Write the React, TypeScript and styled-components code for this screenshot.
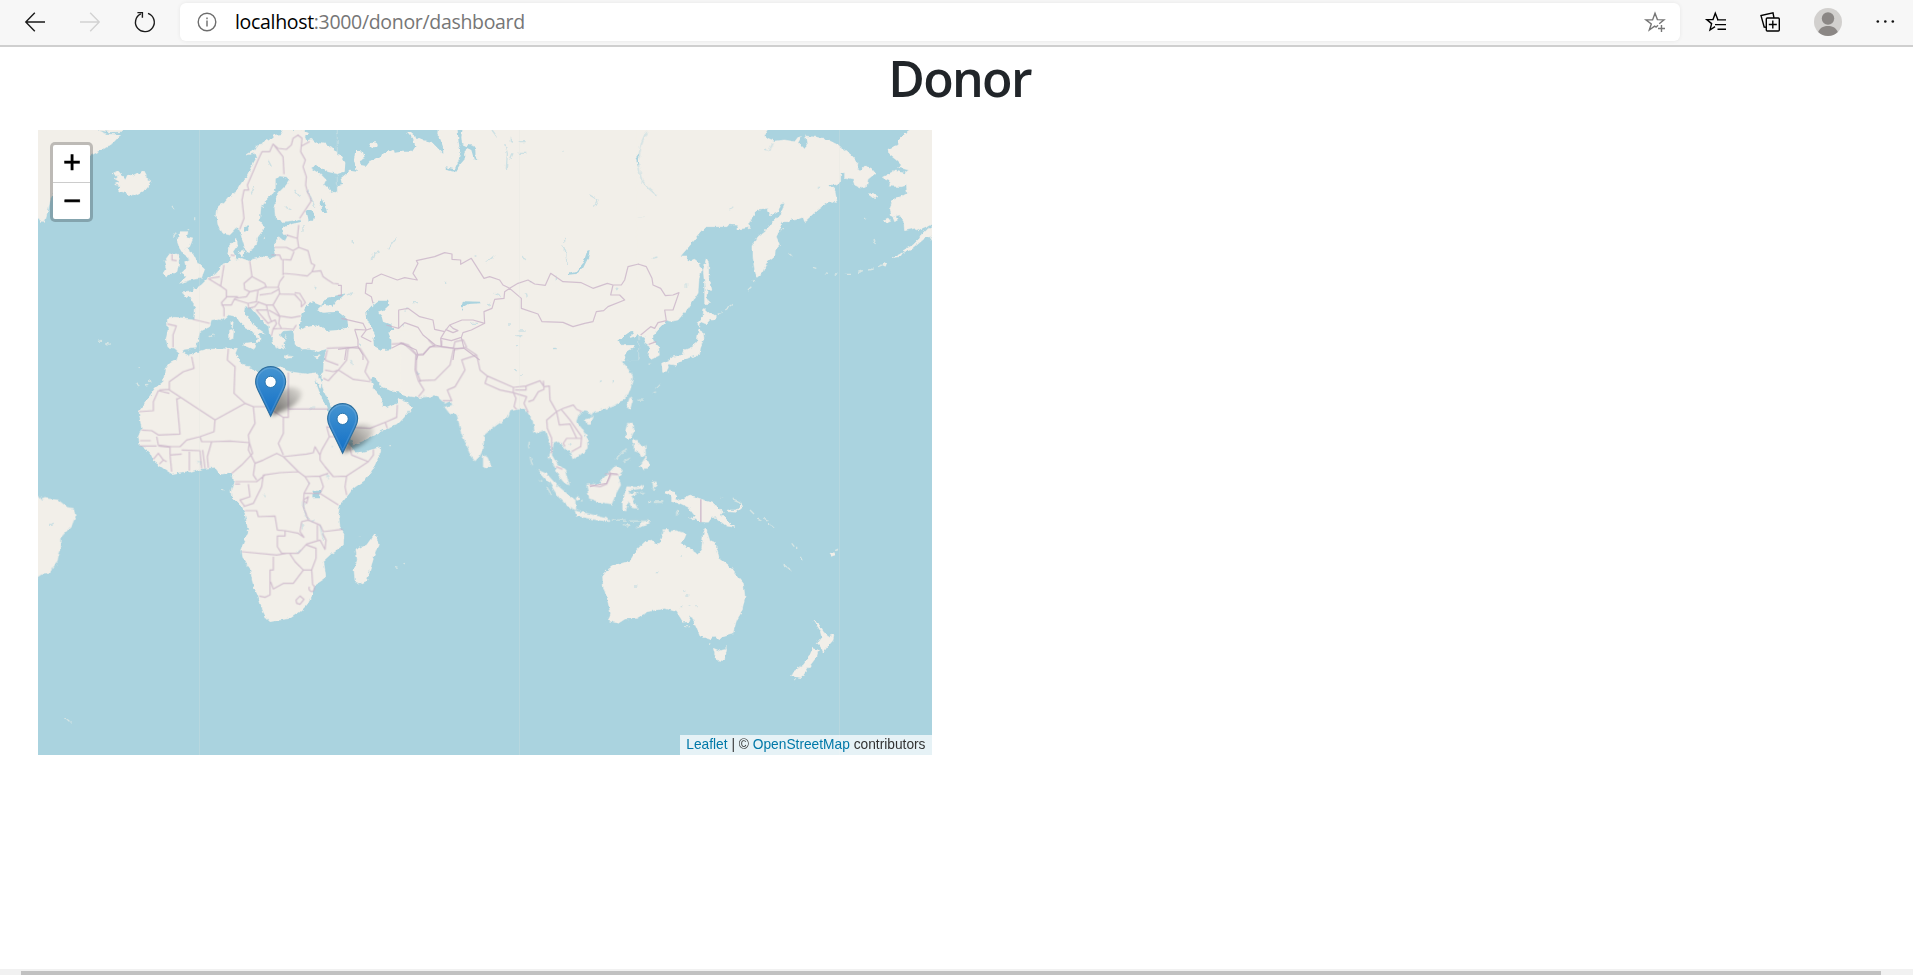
import React from "react";
import styled, { createGlobalStyle } from "styled-components";

const GlobalStyle = createGlobalStyle`
  * { box-sizing: border-box; }
  body { margin: 0; background: #fff; overflow: hidden; }
`;

const Page = styled.div`
  display: flex;
  flex-direction: column;
  width: 1913px;
  height: 975px;
  background: #fff;
`;

const Toolbar = styled.header`
  display: flex;
  align-items: center;
  flex: none;
  height: 47px;
  background: #f7f7f7;
  border-bottom: 2px solid #cfcfcf;
`;

const NavButtons = styled.nav`
  display: flex;
  align-items: center;
  gap: 35px;
  width: 180px;
  padding: 0 0 2px 25px;
`;

const AddressBar = styled.div`
  display: flex;
  align-items: center;
  width: 1500px;
  height: 38px;
  margin-bottom: 1px;
  padding: 0 15px 1px 17px;
  border-radius: 6px;
  background: #fff;
  box-shadow: 0 0 4px rgba(0, 0, 0, 0.07);
`;

const Url = styled.span`
  flex: 1;
  margin-left: 18px;
  color: #767676;
  font-family: "Open Sans", "Noto Sans", sans-serif;
  font-size: 19.5px;
  letter-spacing: -0.32px;
  line-height: 26px;
  white-space: nowrap;
`;

const Host = styled.span`
  color: #000;
`;

const ToolButtons = styled.div`
  display: flex;
  align-items: center;
  gap: 34px;
  padding: 0 0 1px 26px;
`;

const Icon = styled.svg<{ $tone?: string }>`
  display: block;
  flex: none;
  fill: none;
  stroke: ${(p) => p.$tone ?? "#1a1a1a"};
  stroke-width: 1.4;
  overflow: visible;
`;

const Content = styled.main`
  flex: 1;
  display: flex;
  flex-direction: column;
  padding: 0 0 0 38px;
`;

const Title = styled.h1`
  width: 1843px;
  height: 60px;
  margin: 1px 0 22px;
  color: #212529;
  font-family: "Open Sans", "Noto Sans", sans-serif;
  font-size: 50px;
  font-weight: 600;
  letter-spacing: -1.7px;
  line-height: 60px;
  text-align: center;
`;

const MapPane = styled.section`
  position: relative;
  width: 894px;
  height: 625px;
  overflow: hidden;
  background: #aad3df;
`;

const MapDrawing = styled.svg`
  display: block;
`;

const ZoomControl = styled.div`
  position: absolute;
  top: 12px;
  left: 12px;
  display: flex;
  flex-direction: column;
  width: 43px;
  height: 80px;
  border: 3px solid rgba(0, 0, 0, 0.22);
  border-radius: 5px;
  background: #fff;
  background-clip: padding-box;
`;

const ZoomButton = styled.button`
  flex: 1;
  display: flex;
  align-items: center;
  justify-content: center;
  padding: 0 0 0 1px;
  border: 0;
  background: none;
  color: #000;
  font: 400 31px/36px "Liberation Sans", Arial, sans-serif;
  -webkit-text-stroke: 0.5px #000;

  & + & {
    border-top: 1px solid #ccc;
  }
`;

const Attribution = styled.div`
  position: absolute;
  right: 0;
  bottom: 0;
  height: 20px;
  padding: 0 6.5px;
  background: rgba(255, 255, 255, 0.7);
  color: #333;
  font: 13.75px/19px "Liberation Sans", Arial, sans-serif;
  white-space: nowrap;
`;

const MapLink = styled.a`
  color: #0078a8;
  text-decoration: none;
`;

const Pin = styled.svg<{ $x: number; $y: number }>`
  position: absolute;
  left: ${(p) => p.$x}px;
  top: ${(p) => p.$y}px;
  overflow: visible;
`;

const ScrollTrack = styled.div`
  flex: none;
  height: 6px;
  padding: 2px 32px 0 21px;
  background: #f1f1f1;
`;

const ScrollThumb = styled.div`
  height: 4px;
  background: #c1c1c1;
`;

/* Geometry is kept per region, in thirds of a pixel from the region's origin. */
interface Region {
  x: number;
  y: number;
  land: string;
  islets?: string;
  sea?: string;
  haze?: string;
  borders?: string;
}

const regions: Region[] = [
  {
    // Greenland, Europe
    x: 38,
    y: 130,
    land:
      "M-12 -12H180V0L205 12 248 14 225 38 200 55 165 73 100 100 60 160 38 205 28 250 20 277 6 277 0 265 -12 265Z M178 0H255L250 5 215 6Z " +
      "M225 130L240 122 255 140 262 150 270 132 282 138 300 128 306 132 318 122 325 135 323 142 338 152 330 172 310 185 285 198 262 188 242 182 248 168 230 163 246 156 228 145 240 140Z " +
      "M902 72L880 50 860 42 835 38 820 28 805 32 800 20 812 10 790 0H730L735 12 712 15 700 26 680 32 672 45 655 48 650 60 625 75 650 70 655 85 640 110 628 135 610 160 595 185 570 202 560 215 540 230 536 260 540 285 555 310 575 315 595 295 605 300 612 325 618 345 625 367 640 360 655 345 660 320 680 293 665 272 668 240 680 215 700 195 712 175 712 150 725 138 745 140 755 150 745 165 725 185 712 205 714 225 710 235 712 260 730 275 760 272 785 266 792 276 782 278 745 288 735 295 738 308 748 320 740 335 722 320 712 335 710 360 715 378 700 385 680 380 645 388 635 394 610 385 595 390 590 375 585 365 598 345 597 325 575 345 572 375 580 395 555 402 545 420 530 435 510 445 490 465 470 478 465 472 463 485 435 488 440 497 460 505 472 535 470 567 410 562 388 568 390 600 384 630 390 652 410 655 425 668 440 658 470 655 480 632 485 605 515 590 520 570 545 565 560 568 575 555 595 560 605 575 620 590 640 600 660 625 655 640 667 630 662 610 682 612 660 595 640 578 618 545 620 532 640 532 655 550 680 580 692 590 695 615 705 625 705 635 715 655 722 640 742 655 735 640 743 632 725 615 735 603 765 600 768 612 768 640 790 658 815 655 840 665 870 655 902 652V190L880 180 858 165 865 150 845 130 820 115 830 102 870 125 902 132Z " +
      "M425 305L450 305 446 320 465 325 455 350 442 355 465 370 480 400 500 418 490 445 455 450 425 460 445 440 430 430 445 415 440 395 455 388 438 375 425 355 418 335Z " +
      "M395 372L418 372 424 388 417 425 385 437 375 430 385 415 378 395Z M575 600L587 598 585 625 575 630Z M578 578L586 574 583 595Z M617 643L655 640 648 658Z M603 368L618 362 612 378Z M735 678L765 682 745 686Z M830 683L848 677 838 687Z",
    islets: "M405 228l6 8M470 262v12M406 320l8 -12M448 295l5 5M678 328l5 -8M512 620l8 -2M525 612l5 3M180 634l12 -3M205 640l10 3M740 615l8 12M590 385l12 5",
    sea:
      "M783 600L790 560 805 525 825 517 850 527 836 540 855 548 900 545 928 568 930 592 900 600 870 602 840 585 810 590Z M848 527L868 503 898 496 925 490 895 515 885 530 862 524Z M805 240L820 240 832 255 828 272 812 272Z M850 205L862 230 868 250 855 245 848 225Z M618 292L632 288 630 302 618 305Z M862 165L890 182 880 185Z",
    haze: "M795 285V305M830 470L838 478M640 190L650 170M690 90L700 110M740 230L760 240M770 180L785 200M810 180L830 230",
    borders:
      "M605 298L618 265 612 210 618 180 632 180 628 165 660 90 672 65 695 65 705 42 735 80 738 132M705 42L720 55 745 58 760 45 765 25 780 15 792 25 788 65 802 90 795 110 805 140 803 165 808 185 820 212 785 265M815 35L790 48M782 285L778 325 745 315M778 325L782 352 765 362 745 352 710 352M700 375L725 375 730 388 758 390 768 365M735 388V435M782 352L810 362 820 400 830 405 822 425 808 438 770 433 735 430M822 425L848 422 855 440 870 450 885 460 902 462M635 392L642 440 680 460 685 472 720 472 725 455 738 438M642 440L618 460 620 478 635 485 625 500 590 505M635 485L660 480 685 470M660 482L655 515 630 520 590 508M665 495L700 490 722 478M725 490L705 525 685 525 658 515M722 472L725 492 770 493 790 515 790 532M770 488L785 490 802 518 790 530M705 525L725 558 760 563 788 558M685 525L692 555 700 575 690 580 655 540 688 540M630 520L632 535 650 530 660 518M692 540L710 550 725 560 722 580 730 595 768 598M698 575L712 570 715 582 705 597 730 595M705 597L700 618M510 445L548 468 565 480 565 502 550 518 558 535 558 560M558 405L548 468M515 445L545 440M565 500L600 500M550 525L580 525 590 505M465 568L515 580M388 582L415 588 405 615 405 652M402 372V390L416 392M578 375L590 377M765 600L775 585",
  },
  {
    // Western Siberia, Central Asia
    x: 338,
    y: 130,
    land: "M-2 -12H902V690H-2Z",
    sea:
      "M-2 -12H300L298 15 305 22 315 50 316 72 295 50 280 35 255 30 235 22 215 5 208 10 225 28 232 50 222 65 190 65 170 68 168 60 155 66 152 60 130 75 95 95 85 108 68 105 65 90 80 85 75 65 52 62 48 90 57 125 35 122 8 145 12 165 -2 168V132L20 125 22 98 10 78 -2 75Z " +
      "M358 -12H375L370 22 372 42 385 48 400 42 412 60 413 85 425 92 408 88 400 60 385 53 378 70 380 88 365 105 352 125 325 120 322 112 350 118 362 90 368 65 362 40Z " +
      "M85 545L100 528 120 512 150 512 154 525 140 538 120 545 130 555 135 575 160 585 167 600 150 605 160 630 160 658 130 660 108 648 106 630 110 610 98 590 88 570Z " +
      "M755 360L750 385 735 415 712 435 692 437 692 431 715 425 735 400 748 362Z M370 540L367 525 382 514 428 515 428 520 390 522 376 530Z " +
      "M838 632L862 615 880 602 888 610 870 625 902 615V692H862L858 680 866 666 885 655 890 645 855 646Z M892 80l8 -10v40z",
    haze:
      "M462 0L478 22M500 40L508 70 505 118M515 92L525 70M540 35H560M540 70H565M520 20v15M675 62v6M755 195L780 210 770 228M670 350L682 360 688 405M680 320v15M100 390L108 370 125 366M150 357L175 325M445 398L468 378M555 378l8 12M320 455v4M30 495L45 488M222 518H240M200 545l8 -10M470 490L488 497M450 520l8 8M545 603H560M535 617H553M645 656H660M575 455H580M565 490l3 10M655 440v12M400 580H420M195 582v8M65 640l5 8M835 480l5 -6M510 585h6M410 378h5M43 330v8",
    borders:
      "M105 520L100 500 82 490 85 460 102 460 105 445 130 432 178 450 200 443 238 450 225 430 240 400 235 392 290 380 320 368 342 372 342 388 368 390 368 403 400 385 438 445 455 440 485 450 495 465 515 475 500 485 498 505 470 508 462 535 438 545 440 580 405 570 372 570 335 585 320 605 290 598 285 570 245 560 210 535 182 540V595L200 578 240 592 255 615 292 645 275 652 255 675 240 675 235 660 190 640 160 655M515 475L540 460 570 450 590 462 622 466 638 430 675 455 730 458 765 475 808 460 825 465 818 495 845 495 860 510 810 530 797 542 775 545 765 575 740 580 705 590 675 577 612 575 600 552 550 535 550 505 515 475M825 465L850 465 860 450 870 410 902 402M292 645L310 650 308 625 320 605M310 625L340 632 370 622 378 655 350 655 310 650M440 580L400 600 375 608 370 622M322 598L345 608 360 602 345 595 335 585M145 585L182 595M350 655L345 690M378 655L425 690M240 675L235 690M10 565L75 580 85 600 100 595M50 598L60 630 60 650 0 658M50 598L85 600 70 620 100 635M60 650L75 675 75 690M25 655L20 690M0 466H10V496H0",
  },
  {
    // Eastern Siberia, Alaska
    x: 638,
    y: 130,
    land:
      "M-2 -12H388V0L378 15 390 25 410 33 440 30 470 35 480 22 490 20 480 38 498 55 507 45 503 18 560 25 600 45 640 75 660 98 658 115 670 120 680 108 700 115 712 130 690 148 685 172 670 175 650 165 645 150 620 145 620 128 608 130 608 155 590 165 570 163 590 180 598 218 575 213 540 238 500 275 495 262 470 270 460 265 450 275 430 275 425 300 415 320 425 345 412 360 410 380 385 400 372 430 357 442 350 420 345 380 345 345 360 320 385 300 410 270 430 250 440 220 428 222 420 245 398 258 390 235 360 238 340 265 330 285 338 292 300 298 300 286 275 284 270 290 205 290 190 305 165 335 128 378 145 378 150 392 170 388 185 400 190 420 183 450 180 490 150 535 120 570 100 574 85 570 75 582 55 602 45 615 45 630 62 650 64 676 40 688 32 680 35 650 20 640 22 618 -2 618Z " +
      "M205 388L212 400 212 440 222 478 208 478 205 500 215 520 200 522 200 470 196 420Z M197 535L215 550 235 562 230 570 215 570 205 582 188 575 185 592 178 580 195 560Z " +
      "M182 598L195 605 198 625 188 650 184 675 156 682 136 690 121 697 116 706 94 702 86 727 74 727 71 700 91 690 106 680 135 675 140 660 165 650 178 630Z " +
      "M815 -12L815 0 800 10 780 30 778 45 750 58 752 72 775 90 790 105 780 112 812 120 800 130 770 122 733 142 755 150 752 168 790 170 805 166 808 190 790 200 765 210 755 235 762 260 785 255 797 275 800 302 830 295 842 302 870 290 896 275V-12Z " +
      "M896 282L882 290 855 305 845 325 825 345 795 362 798 370 825 355 860 325 896 312Z M690 192l15 -2 15 10 -12 6z M738 270l12 -6 8 10 -12 5z M765 262l10 -5 5 12 -10 6z M735 405l12 -8 -5 12z M876 322l8 12v-15z M765 383l20 -10 10 -6 -8 12z",
    islets: "M720 410l25 -10M660 427l15 -5M620 433h22M590 432h8M525 412l10 3M452 370l10 8M430 300l8 -6M345 455l8 -8M235 555l20 -10M262 540l25 -18M330 480l10 -10M560 428l10 2M690 420l14 -3M680 264l5 4M708 330l5 12",
    haze: "M25 5L12 35 0 90M0 100L10 150 35 178 55 195M275 238l10 -8M395 60L405 40M44 385l14 -4M145 460v14M540 172h8M0 260h15M380 60l10 3",
    borders: "M0 402L25 410 42 445 45 465 68 475 82 497 105 495 123 488 105 540 80 540 85 572 60 578 50 595 38 590 8 615M32 643L55 635",
  },
  {
    // Africa, Arabia
    x: 120,
    y: 340,
    land:
      "M180 35L205 46 220 40 260 28 325 26 352 25 346 40 357 60 365 75 385 80 410 95 440 108 455 85 485 80 500 92 520 97 560 102 590 98 603 130 602 145 585 115 588 130 605 175 620 200 630 230 640 260 680 300 692 320 708 338 730 336 782 322 782 335 760 385 735 420 700 445 680 470 660 495 655 520 660 560 672 580 670 615 635 640 608 665 612 690 615 715 585 735 575 765 560 795 540 815 510 835 450 845 440 835 430 815 415 770 400 735 390 685 365 650 362 630 385 575 375 520 365 500 335 470 333 455 342 425 340 405 328 398 300 403 285 382 245 386 215 397 205 393 155 401 130 385 100 362 90 340 60 315 55 290 65 265 57 215 85 175 105 145 130 125 135 90 150 70 170 60 178 40Z " +
      "M525 0L530 20 575 30 590 28 620 25 612 60 610 95 605 105 607 140 630 190 645 215 670 250 690 290 700 315 730 302 790 270 830 255 850 235 875 205 860 185 835 175 832 190 800 205 788 195 785 175 762 145 750 115 765 112 785 140 820 155 838 152 850 165 902 172V-30H525Z " +
      "M765 580L775 610 762 650 740 722 720 732 705 722 702 690 712 660 708 630 740 615Z M370 15L402 10 396 26Z M458 0h30l-8 10 10 18 -15 -8 -10 -5z",
    islets: "M490 48L520 50M582 52L600 48M808 317h8M825 680l8 2M850 672l5 -2M48 130l10 8M75 135l10 -2M85 122l8 4M718 590v3M308 447v4M330 408l4 4M55 80l4 3",
    sea: "M578 452L605 452 598 475 577 475Z",
    haze: "M550 485L552 510 565 538M600 555L605 580 612 600M232 365h10v12M620 405l6 15M575 545l8 -5M565 430h4M635 320h4M570 208l15 -8M692 60l5 15M530 640l12 -10M432 465l5 6M550 565l-5 -15",
    borders:
      "M215 50L222 85 190 95 148 125 148 150 285 240 375 190 400 200M148 160L115 152 100 185 100 212 57 215M148 148L118 150M170 175L180 282 115 285 95 272 65 270M170 178L182 172M325 26L322 60 345 80 342 160 375 190M400 200L440 200 490 232 505 232V97M505 207H625M490 232V280L475 310 490 345M400 200L405 250 385 285 388 308M285 240L282 275 240 290 245 305 275 305 330 303 388 308 398 340 365 375 335 400M110 290L115 315 155 320 180 320 200 300 240 290M185 330L240 332 245 385M208 335V392M248 330L255 385M275 305L262 350 265 384M388 308L385 330 405 370 400 405 410 420M405 370L430 360 470 340 490 350 560 342 580 338 585 320 600 345 600 360 615 380 640 410 680 408 745 365 695 345 690 325M745 365L760 345V328M490 350L535 395 480 398 430 405 425 440 400 490 370 500M535 395L555 410 600 408 625 400M680 408L675 440 680 465M555 410L568 430 552 460 600 460 655 495M600 410L610 440 600 460M552 460L550 500 565 540 600 555 610 575 668 568M375 512L410 512 415 530 465 528 472 570 495 572 535 580 552 592 540 575 545 545 565 540M495 572V588H472V620L485 640 535 640 560 612 600 600M365 635L470 645 500 640M460 650V690H450V765L435 772 418 768M452 725L460 747 490 730 520 730 550 690 575 690 588 655 588 625 560 615M510 642L525 665 550 690M575 690L578 735M600 600L615 628 618 600 608 580M592 555L592 600M150 345L185 342M150 345L155 395M60 318L110 318M115 318L150 322 150 345M100 358L115 340 130 360 118 372M130 360L140 365M60 302L92 302M345 425H410L435 405M345 432H360M385 432L390 470 360 480 375 500M620 25L685 22 720 25 745 65 735 95 752 122M685 22L680 60 655 90 700 118 752 125M655 75L615 60M655 90L640 95 615 90M655 90L640 105 625 122 610 115M695 262L750 265 800 245 830 232 832 195M795 245L802 265M815 12L850 10 890 45 888 90 902 125M640 265L620 260 628 290 605 330 600 345M690 315L665 290 628 290M615 60L622 30M568 740a8 10 0 1 0 10 -5M528 780l12 -12 12 10 -12 15 -10 -3zM550 480l15 -10 -5 20z",
  },
  {
    // South and Southeast Asia
    x: 400,
    y: 340,
    land:
      "M0 148L10 165 55 172 110 168 135 190 150 182 158 195 135 202 150 222 170 220 175 240 185 280 200 315 215 350 225 363 238 350 250 325 252 285 280 262 325 230 330 213 350 208 375 206 385 220 400 245 405 280 435 270 445 300 455 330 447 350 460 370 475 405 490 425 508 435 500 410 495 390 470 370 455 345 460 310 475 305 485 312 495 325 515 340 518 357 540 345 562 325 562 295 545 265 528 245 535 225 550 213 570 218 574 228 582 215 610 208 640 198 670 180 690 150 698 110 685 85 665 65 676 40 705 20 690 12 670 20 655 0H0Z " +
      "M250 345L262 352 272 375 260 387 250 380Z M556 240L580 231 572 250 560 250Z M690 172L698 178 690 208 680 200Z M682 250L700 250 702 272 692 295 680 290 678 270Z M720 378L738 350 748 375 735 390Z " +
      "M413 390L440 402 470 435 500 460 525 480 528 510 505 500 475 470 450 430Z M525 513L560 520 620 535 628 545 580 538 530 527Z M712 564L730 546 752 543 735 556Z " +
      "M560 435L595 432 620 405 648 375 668 392 655 408 662 435 648 460 635 492 595 485 568 475Z M680 440L715 442 732 432 725 445 690 450 685 462 715 458 695 470 712 505 695 502 685 482 678 510 668 508 668 485Z " +
      "M528 470l8 0 0 12 -6 2z M700 300l12 2 8 12 15 5 2 25 -12 8 -8 -15 -15 -5 0 -14z M758 430l6 -6 6 10 -8 10z M788 575L830 572 858 582 850 602H782Z",
    islets: "M388 305L386 325M390 350l8 28M648 358L680 325M420 420l8 6M440 440l15 25M635 540H680M690 543H745M668 553l18 6M745 485h8M762 487h25M758 440l5 15M700 460h8M720 458h15M760 160l8 -5M770 145l12 -12M670 365l20 -10M545 482h6M745 72h8M830 510v15M715 180h16",
    haze: "M460 25h10M345 92h6M360 105h6M600 125l5 -3M638 125h4M348 17h6M505 310l6 4M50 95l5 8",
    borders:
      "M0 8L25 15 48 42 45 90 55 122 72 150 55 170M55 122L105 120 150 75 160 30 195 22 230 45 240 90 262 108 340 142 340 158 300 150 255 130 262 108M48 45L70 42 90 20 125 20 160 25M105 20L85 0M125 20V0M160 25L165 5 190 0 200 22M230 45L185 60 195 90 165 140 142 150 155 182 128 182M340 142L378 138 420 122 432 140 448 138 450 180 470 215 440 240 442 265 455 295 455 340M345 150H378V140M340 158L348 175 342 200 350 208M340 158L380 170 372 190 385 218M385 185L400 180 415 155 432 148 430 122M470 215L478 255 510 252 530 295M470 215L490 205 520 195 530 208 545 215M485 210L510 240 545 290 542 320 515 335M545 295L500 295 490 310 495 320M468 380L488 388M568 435L600 440 620 432 632 405 628 395M615 402L655 404",
  },
  {
    // Oceania
    x: 590,
    y: 430,
    land:
      "M225 187L235 183 255 187 260 200 255 208 268 212 300 195 335 208 370 220 400 245 392 255 405 265 435 292 410 288 375 262 365 263 355 277 330 275 320 265 298 267 315 258 295 232 270 220 245 215 245 200Z M412 240L440 240 455 225 460 230 440 247 412 245Z " +
      "M347 293L360 333 375 338 388 385 415 405 435 430 460 460 465 500 455 545 440 570 428 612 400 620 390 630 372 618 360 628 330 618 318 590 302 555 295 575 280 577 260 545 225 535 175 545 155 555 140 565 105 567 85 580 55 572 62 550 50 500 40 470 38 440 45 425 70 407 120 393 140 360 165 335 180 330 195 342 210 340 215 320 245 305 287 314 275 340 325 372 335 355 340 310Z " +
      "M370 655L388 662 410 658 405 685 390 698 378 685Z M672 572L688 585 700 605 715 620 732 613 728 632 712 650 700 667 695 655 682 638 695 620 690 600Z M668 655L685 660 680 680 665 700 650 720 635 743 605 738 610 725 640 705 658 680Z M720 370l10 -2 4 8 -10 3z M217 300l18 -2 0 8z M107 0L130 0 122 10 122 25 112 25Z",
    islets: "M578 402L608 424M735 362l10 -5M480 240L492 252M500 262l14 10M520 265l15 8M535 283h6M545 285l10 10M428 207l20 8 10 10M605 340l8 10M620 350v8M632 380v12M395 202h5M615 750l5 -5M285 590h15M172 215h10M195 213h25M260 240l4 8M408 645v12M362 640v6M190 155l5 25M110 285h8M140 292l20 -15",
    haze: "M197 425h8M286 498h12M296 528h5M316 527h4M132 468h10M272 530h5M280 483h6M272 378h4",
    borders: "M333 208V277M0 170L20 165 50 160 62 130 82 132M332 208V277",
  },
  {
    // Brazil
    x: 38,
    y: 440,
    land: "M-12 165H0L10 180 20 175 60 180 88 202 106 205 112 230 100 258 70 290 68 330 60 350 58 365 45 385 38 400 10 403 0 410 -12 412Z",
    islets: "M80 836L90 840 100 850",
    haze: "M33 253H42L47 249",
  },
];

const at = (r: Region) => `translate(${r.x} ${r.y}) scale(.33333)`;

const WorldMap = () => (
  <MapDrawing width="894" height="625" viewBox="38 130 894 625">
    <defs>
      <filter
        id="coastline"
        filterUnits="userSpaceOnUse"
        x="30"
        y="122"
        width="910"
        height="641"
        colorInterpolationFilters="sRGB"
      >
        <feTurbulence type="fractalNoise" baseFrequency=".22" numOctaves="2" seed="4" result="noise" />
        <feDisplacementMap in="SourceGraphic" in2="noise" scale="4" xChannelSelector="R" yChannelSelector="G" />
        <feGaussianBlur stdDeviation=".35" />
      </filter>
    </defs>
    <rect x="38" y="130" width="894" height="625" fill="#aad3df" />
    <g filter="url(#coastline)">
      {regions.map((r, i) => (
        <g key={i} transform={at(r)}>
          <path d={r.land} fill="#f2efe9" stroke="#f2efe9" strokeWidth="1.5" strokeLinejoin="round" />
          {r.islets && <path d={r.islets} fill="none" stroke="#e4ebe6" strokeWidth="4" opacity=".75" />}
        </g>
      ))}
      {regions.map((r, i) => (
        <g key={i} transform={at(r)} fill="none" strokeLinejoin="round">
          {r.sea && <path d={r.sea} fill="#aad3df" />}
          {r.haze && <path d={r.haze} stroke="#aad3df" strokeWidth="4" opacity=".5" />}
        </g>
      ))}
      <ellipse cx="374" cy="145.3" rx="3.6" ry="3" fill="#f2efe9" />
    </g>
    {regions.map((r, i) => (
      <g key={i} transform={at(r)} fill="none" strokeLinejoin="round">
        {r.borders && <path d={r.borders} stroke="#c9b2c8" strokeWidth="3.6" opacity=".78" />}
      </g>
    ))}
    <path d="M199.5 130V755M519.5 130V755M839.5 130V755" stroke="#dfe4dd" opacity=".25" />
  </MapDrawing>
);

const MarkerPin = ({ x, y }: { x: number; y: number }) => (
  <Pin $x={x} $y={y} width="31.25" height="51.25" viewBox="0 0 25 41">
    <defs>
      <linearGradient id="pinFill" x1="0" y1="0" x2="0" y2="1">
        <stop offset="0" stopColor="#4695d1" />
        <stop offset="1" stopColor="#126fc6" />
      </linearGradient>
      <linearGradient id="pinShade" x1="0" y1="1" x2="1" y2="0">
        <stop offset="0" stopColor="#000" stopOpacity=".6" />
        <stop offset="1" stopColor="#000" stopOpacity=".05" />
      </linearGradient>
      <filter id="pinBlur" x="-40%" y="-40%" width="180%" height="180%">
        <feGaussianBlur stdDeviation="1.9" />
      </filter>
    </defs>
    <path d="M13 40L17 24C20 17 31 15 36 19C40 23 34 30 27 34Z" fill="url(#pinShade)" filter="url(#pinBlur)" />
    <path
      d="M12.5 .5C5.9.5.5 5.9.5 12.6c0 2.6 1 5 2 7L12.5 40.2 22.5 19.6c1-2 2-4.4 2-7C24.5 5.9 19.1.5 12.5.5Z"
      fill="url(#pinFill)"
      stroke="#2d6f9f"
      strokeWidth=".9"
    />
    <path
      d="M12.5 1.6C6.5 1.6 1.6 6.5 1.6 12.6c0 2.4.9 4.6 1.9 6.5L12.5 37.7 21.5 19.1c1-1.9 1.9-4.1 1.9-6.5C23.4 6.5 18.5 1.6 12.5 1.6Z"
      fill="none"
      stroke="#fff"
      strokeOpacity=".13"
    />
    <circle cx="12.5" cy="12.7" r="4.5" fill="#fff" stroke="#2e78ae" strokeWidth=".8" />
  </Pin>
);

export default function App() {
  return (
    <Page>
      <GlobalStyle />
      <Toolbar>
        <NavButtons>
          <Icon width="20" height="20" viewBox="0 0 20 20">
            <path d="M9.8 .8L.8 10l9 9.2M.8 10H20" />
          </Icon>
          <Icon width="20" height="20" viewBox="0 0 20 20" $tone="#d2d2d2">
            <path d="M10.2 .8L19.2 10l-9 9.2M19.2 10H0" />
          </Icon>
          <Icon width="20" height="20" viewBox="0 0 20 20">
            <path d="M13 1.4A9.4 9.4 0 1 1 5.8 1.8M2.4 .6H7.4V5.8" />
          </Icon>
        </NavButtons>
        <AddressBar>
          <Icon width="20" height="20" viewBox="0 0 20 20" $tone="#6d6d6d">
            <circle cx="10" cy="10" r="8.8" />
            <path d="M10 8.6V14.6M10 5.4V7.2" />
          </Icon>
          <Url>
            <Host>localhost</Host>:3000/donor/dashboard
          </Url>
          <Icon width="20" height="20" viewBox="0 0 20 20" $tone="#767676">
            <path d="M11.2 15.2L9.6 14.2 4.3 18 6.3 11.9 1 7.9H7.6L10 1.2 12.4 7.6 19 7.9 14.2 11.8M16.5 13V20M13 16.5H20M13 13.2l-2 2" />
          </Icon>
        </AddressBar>
        <ToolButtons>
          <Icon width="20" height="20" viewBox="0 0 20 20" $tone="#000">
            <path d="M12 7.9L9.3 1.2 7 7.6H.8L5.6 11.6 4 18 9 14.6M11 7.9H20M9 12.6H20M11.5 17.2H20" />
          </Icon>
          <Icon width="20" height="20" viewBox="0 0 20 20" $tone="#000">
            <rect x="6.3" y="6" width="13" height="13" rx="1" />
            <path d="M12.8 8.5v8M8.8 12.5h8M6 15.2L4.2 15 1 3.6 13 .8 14 6" />
          </Icon>
          <Icon width="28" height="28" viewBox="0 0 28 28" $tone="none">
            <circle cx="14" cy="14" r="14" fill="#d2d0ce" />
            <circle cx="14" cy="10.5" r="6.2" fill="#8b8785" />
            <path d="M4.2 24C6 19.5 10 18 14 18s8 1.5 9.8 6A14 14 0 0 1 4.2 24Z" fill="#8b8785" />
          </Icon>
          <Icon width="20" height="20" viewBox="0 0 20 20" $tone="none">
            <g fill="#111">
              <circle cx="1.8" cy="9.5" r="1.3" />
              <circle cx="9.3" cy="9.5" r="1.3" />
              <circle cx="16.8" cy="9.5" r="1.3" />
            </g>
          </Icon>
        </ToolButtons>
      </Toolbar>
      <Content>
        <Title>Donor</Title>
        <MapPane>
          <WorldMap />
          <MarkerPin x={217.3} y={236.3} />
          <MarkerPin x={288.7} y={272.5} />
          <ZoomControl>
            <ZoomButton>+</ZoomButton>
            <ZoomButton>−</ZoomButton>
          </ZoomControl>
          <Attribution>
            <MapLink>Leaflet</MapLink> | © <MapLink>OpenStreetMap</MapLink> contributors
          </Attribution>
        </MapPane>
      </Content>
      <ScrollTrack>
        <ScrollThumb />
      </ScrollTrack>
    </Page>
  );
}
